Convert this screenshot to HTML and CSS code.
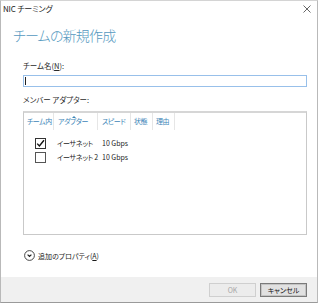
FILE: index.html
```html
<!DOCTYPE html>
<html lang="ja">
<head>
<meta charset="utf-8">
<link rel="stylesheet" href="styles.css">
</head>
<body>
<div class="window">
  <div class="titlebar">
    <span class="title">NIC チーミング</span>
    <svg class="close" width="8" height="8" viewBox="0 0 8 8"><path d="M0.5 0.5L7.5 7.5M7.5 0.5L0.5 7.5" stroke="#555" stroke-width="0.9" fill="none"/></svg>
  </div>
  <div class="content">
    <h1 class="heading">チームの新規作成</h1>
    <div class="label">チーム名(<u>N</u>):</div>
    <div class="input"><span class="caret"></span></div>
    <div class="label label2">メンバー アダプター:</div>
    <div class="table">
      <div class="thead">
        <div class="th c1">チーム内</div>
        <div class="th c2">アダプター<span class="sort"></span></div>
        <div class="th c3">スピード</div>
        <div class="th c4">状態</div>
        <div class="th c5">理由</div>
      </div>
      <div class="rows">
        <div class="row">
          <span class="cb checked"><svg width="9" height="9" viewBox="0 0 9 9"><path d="M1.2 4.6L3.4 7L8 1.2" stroke="#111" stroke-width="1.4" fill="none"/></svg></span>
          <span class="name">イーサネット</span>
          <span class="speed">10 Gbps</span>
        </div>
        <div class="row">
          <span class="cb"></span>
          <span class="name">イーサネット 2</span>
          <span class="speed">10 Gbps</span>
        </div>
      </div>
    </div>
    <div class="more">
      <svg class="chev" width="11" height="11" viewBox="0 0 11 11"><circle cx="5.5" cy="5.5" r="4.9" stroke="#333" stroke-width="0.9" fill="none"/><path d="M3.6 4.6L5.5 6.5L7.4 4.6" stroke="#222" stroke-width="1.2" fill="none"/></svg>
      <span>追加のプロパティ(<u>A</u>)</span>
    </div>
  </div>
  <div class="footer">
    <button class="btn disabled">OK</button>
    <button class="btn default">キャンセル</button>
  </div>
</div>
</body>
</html>
```
FILE: styles.css
```css
* { box-sizing: border-box; }
html, body { margin: 0; padding: 0; background: #fff; }
body {
  width: 320px;
  height: 304px;
  overflow: hidden;
  font-family: "Noto Sans CJK JP", "Noto Sans", sans-serif;
  font-feature-settings: "palt";
  color: #1a1a1a;
}
.window {
  width: 318px;
  height: 303px;
  border: 1px solid #b9b9b9;
  border-top-color: #d4d4d4;
  border-bottom-color: #9a9a9a;
  display: flex;
  flex-direction: column;
  background: #fff;
}
.titlebar {
  height: 19px;
  display: flex;
  align-items: center;
  justify-content: space-between;
  padding: 0 6px 3px 2px;
}
.title { font-size: 8px; line-height: 10px; color: #222; letter-spacing: -0.2px; }
.close { display: block; }
.content {
  flex: 1;
  padding: 0 10px 0 22px;
  display: flex;
  flex-direction: column;
}
.heading {
  margin: 5px 0 0 -10px;
  font-size: 14px;
  line-height: 20px;
  font-weight: 300;
  color: #5599c0;
  letter-spacing: -0.8px;
}
.label {
  margin-top: 16px;
  font-size: 7.5px;
  line-height: 10px;
  color: #2a2a2a;
}
.label u { text-decoration: underline; }
.input {
  margin-top: 4px;
  height: 12px;
  border: 1px solid #98c0ea;
  position: relative;
}
.caret {
  position: absolute;
  left: 1px;
  top: 1px;
  width: 1px;
  height: 8px;
  background: #222;
}
.label2 { margin-top: 8px; }
.table {
  margin-top: 6px;
  height: 124px;
  border: 1px solid #c9c9c9;
  border-top: 2px solid #d6d6d6;
}
.thead {
  display: flex;
  height: 17px;
  align-items: stretch;
}
.th {
  font-size: 7px;
  line-height: 17px;
  color: #3d86b8;
  padding-left: 3px;
  border-right: 1px solid #e6e6e6;
  position: relative;
  white-space: nowrap;
  overflow: hidden;
  letter-spacing: -0.5px;
}
.c1 { width: 30px; }
.c2 { width: 44px; padding-left: 4px; }
.c3 { width: 33px; padding-left: 4px; }
.c4 { width: 22px; padding-left: 3px; }
.c5 { width: 22px; padding-left: 3px; }
.sort {
  position: absolute;
  left: 18px;
  top: 3px;
  width: 0;
  height: 0;
  border-left: 2px solid transparent;
  border-right: 2px solid transparent;
  border-bottom: 2px solid #3d86b8;
}
.rows { padding-top: 6px; }
.row {
  display: flex;
  align-items: center;
  height: 14px;
  font-size: 7px;
  color: #1a1a1a;
}
.cb {
  width: 11px;
  height: 11px;
  margin-left: 11px;
  border: 1px solid #555;
  display: flex;
  align-items: center;
  justify-content: center;
  background: #fff;
}
.cb.checked { border-color: #333; }
.cb svg { display: block; }
.name { margin-left: 11px; width: 45px; white-space: nowrap; letter-spacing: -0.2px; }
.speed { white-space: nowrap; }
.more {
  margin-top: 15px;
  display: flex;
  align-items: center;
  font-size: 7px;
  color: #1a1a1a;
  margin-left: 1px;
}
.chev { display: block; margin-right: 3px; }
.footer {
  height: 25px;
  background: #f0f0f0;
  display: flex;
  justify-content: flex-end;
  align-items: flex-start;
  padding: 6px 10px 0 0;
  gap: 4px;
}
.btn {
  width: 47px;
  height: 14px;
  padding: 0;
  font-family: "Noto Sans CJK JP", "Noto Sans", sans-serif;
  font-feature-settings: "palt";
  font-size: 7px;
  line-height: 12px;
  background: #e1e1e1;
  border: 1px solid #adadad;
  color: #111;
}
.btn.disabled {
  background: #ececec;
  border-color: #cfcfcf;
  color: #a8a8a8;
}
.btn.default {
  border: 1px solid #7a7a7a;
  box-shadow: inset 0 0 0 1px #c4c4c4;
}
```
